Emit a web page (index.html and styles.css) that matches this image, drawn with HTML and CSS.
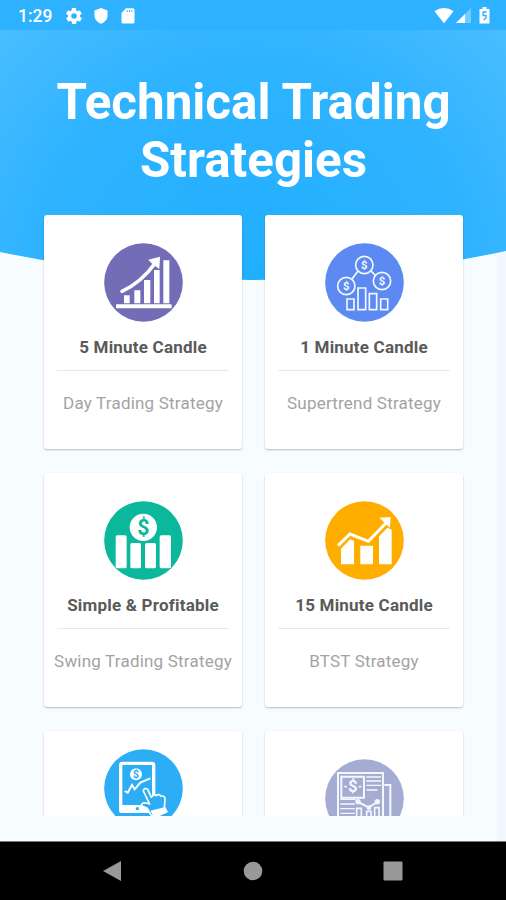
FILE: index.html
```
<!DOCTYPE html>
<html lang="en">
<head>
    <meta charset="UTF-8">
    <meta name="viewport" content="width=device-width, initial-scale=1.0">
    <title>Technical Trading Strategies</title>
    <link rel="stylesheet" href="styles.css">
</head>
<body>
    <svg class="hero" viewBox="0 0 506 281" preserveAspectRatio="none">
        <defs>
            <radialGradient id="sky" gradientUnits="userSpaceOnUse" cx="253" cy="281" r="370">
                <stop offset="0" stop-color="#20afff"/>
                <stop offset="0.6" stop-color="#2fb3ff"/>
                <stop offset="1" stop-color="#4cbeff"/>
            </radialGradient>
        </defs>
        <path d="M0 0H506V251Q368 280 253 280Q138 280 0 252Z" fill="url(#sky)"/>
    </svg>

    <div class="status-bar">
        <span class="time">1:29</span>
        <svg class="gear" width="16" height="16" viewBox="2 2 20 20">
            <path fill="#fff" d="M19.4 13c0-.3.1-.6.1-1s0-.7-.1-1l2.1-1.600c.2-.2.2-.4.1-.6l-2-3.500c-.1-.2-.4-.3-.6-.2l-2.500 1c-.5-.4-1.100-.7-1.700-1l-.4-2.600c0-.3-.2-.5-.5-.5h-4c-.3 0-.5.2-.5.4l-.4 2.700c-.6.200-1.200.6-1.700 1l-2.500-1c-.2-.1-.5 0-.6.2l-2 3.500c-.1.200-.1.500.1.600L4.600 11c0 .3-.1.700-.1 1s0 .7.1 1l-2.100 1.600c-.2.200-.2.400-.1.600l2 3.500c.1.200.4.300.6.200l2.500-1c.5.400 1.100.7 1.700 1l.4 2.600c0 .300.200.500.500.500h4c.3 0 .5-.2.500-.4l.4-2.700c.6-.2 1.200-.6 1.700-1l2.500 1c.2.100.5 0 .6-.2l2-3.500c.1-.2.100-.5-.1-.6zM12 15.500a3.500 3.500 0 1 1 0-7 3.500 3.500 0 0 1 0 7z"/>
        </svg>
        <svg class="shield" width="14" height="16" viewBox="0 0 14 16">
            <path fill="#fff" d="M7 0L13.500 2.600V7.500C13.500 11.300 10.700 14.600 7 15.700C3.300 14.600.5 11.300.5 7.500V2.600Z"/>
        </svg>
        <svg class="sd" width="14" height="16" viewBox="0 0 14 16">
            <path fill="#fff" d="M5 .3H12Q13.500.3 13.500 1.800V14Q13.500 15.500 12 15.500H2Q.5 15.500.5 14V5Z"/>
            <path stroke="#2eb2ff" stroke-width="1.100" d="M6.200 2.200V4M8.500 2.200V4M10.800 2.200V4"/>
        </svg>
        <svg class="wifi" width="20" height="16" viewBox="0 0 20 16">
            <path fill="#fff" d="M.5 3.200Q10-3.200 19.500 3.200L10 15.200Z"/>
        </svg>
        <svg class="signal" width="15" height="15" viewBox="0 0 15 15">
            <path fill="#fff" opacity="0.35" d="M0 15L15 0V15Z"/>
            <path fill="#fff" d="M0 15L9 6V15Z"/>
        </svg>
        <svg class="battery" width="11" height="17" viewBox="0 0 11 17">
            <path fill="#fff" d="M3.500 0H7.500V2H10.500V16.500H.5V2H3.500Z"/>
            <path fill="none" stroke="#2eb2ff" stroke-width="1.400" d="M7.500 5H4.200V8.500H7V11L4.500 13"/>
        </svg>
    </div>

    <h1>Technical Trading Strategies</h1>

    <main>
        <div class="card">
            <svg class="icon" viewBox="0 0 237 237">
                <circle cx="118.500" cy="118.500" r="118" fill="#736db8"/>
                <path fill="#fff" d="M60 157h17v24H60zM91 142h18v39H91zM120 111h19v70h-19zM150 81h17v100h-17zM178 52h18v129h-18zM133 50L168 41L166 78L153 69L142 60Z"/>
                <rect x="36" y="184" width="167" height="12" rx="2" fill="#fff"/>
                <path d="M54 145Q111 119 154 60" fill="none" stroke="#fff" stroke-width="11" stroke-linecap="round"/>
            </svg>
            <h2>5 Minute Candle</h2>
            <p>Day Trading Strategy</p>
        </div>
        <div class="card">
            <svg class="icon" viewBox="0 0 237 237">
                <circle cx="118.500" cy="118.500" r="118" fill="#5c8af2"/>
                <g fill="none" stroke="#f4f8ff" stroke-width="5">
                    <circle cx="118" cy="66" r="26"/>
                    <circle cx="64" cy="129" r="26"/>
                    <circle cx="171" cy="114" r="26"/>
                    <path d="M99 84L81 108M138 84L151 97"/>
                    <path d="M66 168h21v32H66zM99 135h23v65H99zM133 152h22v48h-22zM167 168h21v32h-21z"/>
                </g>
                <g class="coin" font-size="34">
                    <text x="118" y="78">$</text>
                    <text x="64" y="141">$</text>
                    <text x="171" y="126">$</text>
                </g>
            </svg>
            <h2>1 Minute Candle</h2>
            <p>Supertrend Strategy</p>
        </div>
        <div class="card">
            <svg class="icon" viewBox="0 0 237 237">
                <circle cx="118.500" cy="118.500" r="118" fill="#0cb89c"/>
                <g fill="#fff">
                    <circle cx="118" cy="79" r="41"/>
                    <rect x="35" y="103" width="33" height="99" rx="5"/>
                    <rect x="79" y="126" width="32" height="76" rx="5"/>
                    <rect x="123" y="126" width="33" height="76" rx="5"/>
                    <rect x="167" y="103" width="34" height="99" rx="5"/>
                </g>
                <text class="coin green" x="118" y="101" font-size="64">$</text>
            </svg>
            <h2>Simple &amp; Profitable</h2>
            <p>Swing Trading Strategy</p>
        </div>
        <div class="card">
            <svg class="icon" viewBox="0 0 237 237">
                <circle cx="118.500" cy="118.500" r="118" fill="#ffae00"/>
                <path d="M39 134L75 99L130 121L183 66" fill="none" stroke="#fff" stroke-width="9"/>
                <path fill="#fff" d="M163 50L197 48L195 81ZM48 143L75 115L87 119V190H48ZM106 134h38v56h-38zM162 190V106L187 80L200 86V190Z"/>
            </svg>
            <h2>15 Minute Candle</h2>
            <p>BTST Strategy</p>
        </div>
        <div class="card">
            <svg class="icon raised" viewBox="0 0 237 237">
                <circle cx="118.500" cy="118.500" r="118" fill="#2cadf6"/>
                <rect x="50" y="43" width="99" height="144" rx="5" fill="none" stroke="#fff" stroke-width="10"/>
                <path fill="#fff" d="M46 168h100v22H46z"/>
                <circle cx="100" cy="179" r="5" fill="#2cadf6"/>
                <circle cx="96" cy="76" r="18" fill="#fff"/>
                <text class="coin blue" x="96" y="88" font-size="33">$</text>
                <path d="M62 126L71 131L84 108L92 121L109 101L139 88" fill="none" stroke="#fff" stroke-width="6"/>
                <path d="M140 197L130 178L112 170Q113 160 127 162L137 165L118 126Q121 114 131 121L142 145Q150 134 157 140Q166 133 171 142Q182 138 183 150L181 178L189 188L151 205Z" fill="#2cadf6" stroke="#fff" stroke-width="5" stroke-linejoin="round"/>
                <path fill="#fff" d="M139 185L184 174L190 186L153 210Z"/>
            </svg>
        </div>
        <div class="card">
            <svg class="icon" viewBox="0 0 237 237">
                <circle cx="118.500" cy="118.500" r="118" fill="#a5acd2"/>
                <g fill="none" stroke="#f5f7ff" stroke-width="6">
                    <path d="M39 237V42H174V237M178 78H196V237"/>
                    <path d="M49 53h68v63H49z"/>
                    <path stroke-width="4" d="M124 54H168M124 66H168M124 79H168M124 93H157M46 121H92M46 135H89M46 149H89M46 163H89"/>
                    <path d="M99 129L131 145L157 129"/>
                    <path stroke-width="5" d="M95 175V148H109V175M125 175V157H138V175M149 175V146H162V175M58 83H66M101 83H109"/>
                </g>
                <g fill="#f5f7ff">
                    <circle cx="99" cy="128" r="8"/>
                    <circle cx="132" cy="146" r="7"/>
                    <circle cx="157" cy="128" r="8"/>
                </g>
                <text class="coin" x="83" y="100" font-size="50">$</text>
            </svg>
        </div>
    </main>

    <nav>
        <svg width="20" height="22" viewBox="0 0 20 22"><path fill="#999" d="M1 11L19 1V21Z"/></svg>
        <svg width="20" height="22" viewBox="0 0 20 22"><circle cx="10" cy="11" r="9.300" fill="#999"/></svg>
        <svg width="20" height="22" viewBox="0 0 20 22"><rect x="0.500" y="1.500" width="19" height="19" rx="1" fill="#999"/></svg>
    </nav>
</body>
</html>
```
FILE: styles.css
```
* {
    box-sizing: border-box;
}

body {
    font-family: Roboto, sans-serif;
    margin: 0;
    height: 900px;
    display: flex;
    flex-direction: column;
    overflow: hidden;
    background: linear-gradient(to right, #f7fcff 0, #f7fcff 496px, #f2f7ff 500px);
}

/* blue backdrop behind the title and first row of cards */
.hero {
    position: absolute;
    top: 0;
    left: 0;
    width: 506px;
    height: 281px;
    z-index: -1;
}

.status-bar {
    display: flex;
    align-items: center;
    height: 30px;
    flex: none;
    padding: 1px 16px 0 18px;
    background-color: #2eb2ff;
    color: white;
}

.time {
    font-size: 17.5px;
    font-weight: 500;
    width: 48px;
}

.shield {
    margin-left: 12px;
}

.sd {
    margin-left: 13px;
}

.wifi {
    margin-left: auto;
}

.signal {
    margin-left: 2px;
}

.battery {
    margin-left: 8px;
}

h1 {
    margin: 43px 40px 26px 41px;
    height: 116px;
    flex: none;
    color: white;
    font-size: 49.3px;
    font-weight: 700;
    line-height: 58px;
    text-align: center;
}

main {
    display: grid;
    grid-template-columns: 198px 198px;
    grid-auto-rows: 234px;
    gap: 24px 23px;
    height: 601px;
    flex: none;
    padding: 0 43px 0 44px;
    overflow: hidden;
}

.card {
    background-color: white;
    border-radius: 3px;
    box-shadow: 0 1px 2px rgba(0, 0, 0, 0.25);
    padding: 28px 13px 0;
    text-align: center;
}

.icon {
    display: block;
    width: 79px;
    height: 79px;
    margin: 0 auto;
}

.raised {
    margin-top: -10px;
}

.coin {
    fill: #f5f8ff;
    font-family: Roboto, sans-serif;
    font-weight: 700;
    text-anchor: middle;
}

.green {
    fill: #0cb89c;
}

.blue {
    fill: #2cadf6;
}

h2 {
    margin: 14px 0 0;
    padding-bottom: 12px;
    border-bottom: 1px solid #e8e8e8;
    color: #5a5a5a;
    font-size: 17px;
    font-weight: 700;
    line-height: 22px;
    letter-spacing: 0.2px;
}

.card p {
    margin: 21px -13px 0;
    color: #a3a3a3;
    font-size: 17px;
    line-height: 22px;
    letter-spacing: 0.2px;
    white-space: nowrap;
}

nav {
    display: flex;
    justify-content: space-between;
    align-items: center;
    margin-top: auto;
    height: 59px;
    flex: none;
    padding: 0 103px 0 102px;
    background-color: black;
    border-top: 1px solid #777;
}
```
